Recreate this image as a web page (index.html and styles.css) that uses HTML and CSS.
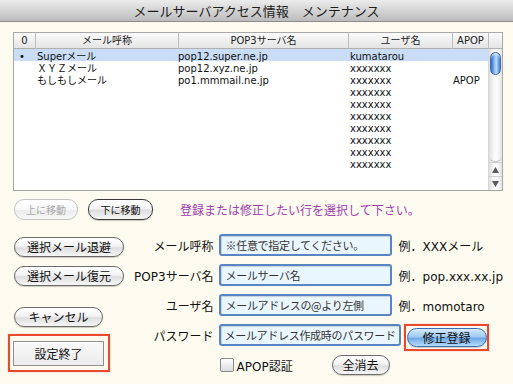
FILE: index.html
```html
<!DOCTYPE html>
<html lang="ja">
<head>
<meta charset="utf-8">
<title>メールサーバアクセス情報 メンテナンス</title>
<link rel="stylesheet" href="styles.css">
</head>
<body>
<div class="titlebar">メールサーバアクセス情報　メンテナンス</div>
<main class="content">
  <section class="table">
    <div class="thead">
      <div class="th">0</div>
      <div class="th">メール呼称</div>
      <div class="th">POP3サーバ名</div>
      <div class="th">ユーザ名</div>
      <div class="th">APOP</div>
      <div class="th"></div>
    </div>
    <div class="tbody">
      <div class="rows">
        <div class="row selected"><span class="mark">•</span><span>Superメール</span><span>pop12.super.ne.jp</span><span>kumatarou</span><span></span></div>
        <div class="row"><span class="mark"></span><span>ＸＹＺメール</span><span>pop12.xyz.ne.jp</span><span>xxxxxxx</span><span></span></div>
        <div class="row"><span class="mark"></span><span>もしもしメール</span><span>po1.mmmail.ne.jp</span><span>xxxxxxx</span><span>APOP</span></div>
        <div class="row"><span class="mark"></span><span></span><span></span><span>xxxxxxx</span><span></span></div>
        <div class="row"><span class="mark"></span><span></span><span></span><span>xxxxxxx</span><span></span></div>
        <div class="row"><span class="mark"></span><span></span><span></span><span>xxxxxxx</span><span></span></div>
        <div class="row"><span class="mark"></span><span></span><span></span><span>xxxxxxx</span><span></span></div>
        <div class="row"><span class="mark"></span><span></span><span></span><span>xxxxxxx</span><span></span></div>
        <div class="row"><span class="mark"></span><span></span><span></span><span>xxxxxxx</span><span></span></div>
        <div class="row"><span class="mark"></span><span></span><span></span><span>xxxxxxx</span><span></span></div>
      </div>
      <div class="scrollbar">
        <div class="track"><div class="thumb"></div></div>
        <div class="arrow"><svg width="7" height="6" viewBox="0 0 7 6"><polygon points="3.5,0 7,6 0,6" fill="#5a5a5a"/></svg></div>
        <div class="arrow"><svg width="7" height="6" viewBox="0 0 7 6"><polygon points="0,0 7,0 3.5,6" fill="#5a5a5a"/></svg></div>
      </div>
    </div>
  </section>

  <div class="moverow">
    <button class="pill small disabled">上に移動</button>
    <button class="pill small dark">下に移動</button>
    <span class="message">登録または修正したい行を選択して下さい。</span>
  </div>

  <div class="form">
    <div class="actions">
      <button class="pill wide">選択メール退避</button>
      <button class="pill wide gap1">選択メール復元</button>
      <button class="pill cancel">キャンセル</button>
      <div class="redframe finish-frame"><button class="square">設定終了</button></div>
    </div>
    <div class="fields">
      <div class="field">
        <span class="label">メール呼称</span>
        <input class="input" type="text" value="※任意で指定してください。">
        <span class="example">例．XXXメール</span>
      </div>
      <div class="field">
        <span class="label">POP3サーバ名</span>
        <input class="input" type="text" value="メールサーバ名">
        <span class="example">例．pop.xxx.xx.jp</span>
      </div>
      <div class="field">
        <span class="label">ユーザ名</span>
        <input class="input" type="text" value="メールアドレスの@より左側">
        <span class="example">例．momotaro</span>
      </div>
      <div class="field">
        <span class="label">パスワード</span>
        <input class="input pw" type="text" value="メールアドレス作成時のパスワード">
        <div class="redframe save-frame"><button class="pill blue">修正登録</button></div>
      </div>
      <div class="field last">
        <label class="check"><span class="box"></span><span>APOP認証</span></label>
        <button class="pill clear">全消去</button>
      </div>
    </div>
  </div>
</main>
</body>
</html>
```

FILE: styles.css
```css
* { box-sizing: border-box; }

body {
  margin: 0;
  width: 513px;
  height: 384px;
  overflow: hidden;
  background: #fdfbef;
  font-family: "DejaVu Sans", "Noto Sans CJK JP", sans-serif;
  color: #111;
}

.titlebar {
  height: 22px;
  line-height: 21px;
  text-align: center;
  font-size: 13px;
  font-family: "Noto Sans CJK JP", sans-serif;
  color: #1c1c1c;
  background: linear-gradient(#ececec, #bcbcbc);
  border-bottom: 1px solid #8c8c8c;
}

.content {
  padding: 10px 10px 0 13px;
}

/* table */
.table {
  width: 490px;
  height: 159px;
  border: 1px solid #a8a8a8;
  background: #fff;
  display: flex;
  flex-direction: column;
}

.thead {
  display: grid;
  grid-template-columns: 22px 143px 170px 104px 36px 1fr;
  height: 16px;
  border-bottom: 1px solid #b0b0b0;
  background: linear-gradient(#fbfbfb, #e4e4e4);
}

.th {
  border-right: 1px solid #bcbcbc;
  font-size: 10px;
  line-height: 16px;
  text-align: center;
  color: #222;
  white-space: nowrap;
}
.th:last-child { border-right: none; }

.tbody {
  flex: 1;
  display: flex;
  min-height: 0;
}

.rows { flex: 1; }

.row {
  display: grid;
  grid-template-columns: 23px 141px 172px 103px 1fr;
  height: 12px;
  font-size: 10px;
  line-height: 13px;
  white-space: nowrap;
}
.row span { padding-top: 1px; }
.row .mark { padding-left: 5px; }
.row.selected { background: #c9ddf6; }

.scrollbar {
  width: 14px;
  display: flex;
  flex-direction: column;
  border-left: 1px solid #d6d6d6;
  background: linear-gradient(90deg, #dedede, #f6f6f6 35%, #fdfdfd 60%, #e4e4e4);
}

.track {
  flex: 1;
  padding: 3px 1px 0 1px;
  border-bottom: 1px solid #c8c8c8;
  border-radius: 0 0 6px 6px;
}

.thumb {
  height: 23px;
  border-radius: 6px;
  border: 1px solid #3a6db6;
  background: linear-gradient(90deg, #2f66c0, #8fc0f0 40%, #b9dbf8 60%, #3f7bd0);
  box-shadow: inset 0 2px 1px rgba(255,255,255,.5);
}

.arrow {
  height: 14px;
  display: flex;
  align-items: center;
  justify-content: center;
  border-top: 1px solid #cfcfcf;
}

/* move row */
.moverow {
  display: flex;
  align-items: center;
  margin-top: 8px;
  margin-left: 1px;
  height: 21px;
}

.pill {
  font-family: "Noto Sans CJK JP", sans-serif;
  font-size: 12px;
  line-height: 18px;
  height: 20px;
  padding: 0;
  color: #111;
  border: 1px solid #6a6a6a;
  border-radius: 10px;
  background: linear-gradient(#ffffff, #f3f3f3 45%, #dedede 55%, #f6f6f6);
  box-shadow: 0 1px 1px rgba(0,0,0,.2);
}

.pill.small {
  width: 64px;
  height: 21px;
  font-size: 10px;
}
.pill.disabled {
  color: #a8a8a8;
  border-color: #c4c4c4;
  background: linear-gradient(#ffffff, #f7f7f7 50%, #ececec 55%, #f8f8f8);
  box-shadow: none;
}
.pill.dark {
  margin-left: 10px;
  width: 65px;
  border-color: #3a3a3a;
}

.message {
  margin-left: 27px;
  font-size: 12px;
  font-family: "Noto Sans CJK JP", sans-serif;
  color: #a03cb0;
}

/* form */
.form {
  display: flex;
  margin-top: 14px;
}

.actions {
  width: 117px;
  display: flex;
  flex-direction: column;
  align-items: flex-start;
  padding-top: 3px;
  padding-left: 1px;
}

.pill.wide { width: 110px; }
.pill.gap1 { margin-top: 9px; }
.pill.cancel { width: 89px; margin-top: 21px; }

.redframe {
  border: 2px solid #e84a30;
  box-shadow: 0 0 1px rgba(232,74,48,.6);
}

.finish-frame {
  margin-top: 7px;
  margin-left: -6px;
  width: 102px;
  height: 38px;
  padding: 5px 4px 4px 3px;
}

.square {
  width: 91px;
  height: 25px;
  padding: 0;
  font-family: "Noto Sans CJK JP", sans-serif;
  font-size: 12px;
  color: #111;
  border: 1px solid #8e8e8e;
  background: linear-gradient(#f9f9f9, #ececec);
  box-shadow: inset 0 1px 0 #fff;
}

.fields {
  display: flex;
  flex-direction: column;
  gap: 8px;
}

.field {
  display: flex;
  align-items: center;
  height: 22px;
  font-size: 12px;
}

.label {
  width: 87px;
  margin-right: 5px;
  text-align: right;
  white-space: nowrap;
}

.input {
  width: 173px;
  height: 22px;
  padding: 0 0 0 5px;
  font-family: "Noto Sans CJK JP", sans-serif;
  font-size: 11px;
  letter-spacing: -0.3px;
  color: #333;
  background: #e9f6fe;
  border: 2px solid #5a85c4;
  border-radius: 3px;
  box-shadow: inset 1px 1px 1px rgba(0,0,0,.15);
  outline: none;
}
.input.pw { width: 182px; padding-left: 4px; }

.example {
  margin-left: 7px;
  white-space: nowrap;
}

.save-frame {
  margin-left: 3px;
  margin-top: 4px;
  width: 85px;
  height: 27px;
  padding: 2px 0 0 1px;
}

.pill.blue {
  width: 80px;
  height: 19px;
  line-height: 17px;
  border-color: #3c6cb0;
  background: linear-gradient(#d6ebfc, #9fcaf2 45%, #6fa9e6 55%, #b7ddfa);
}

.field.last {
  margin-top: 1px;
  height: 20px;
  padding-left: 93px;
}

.check {
  display: flex;
  align-items: center;
  width: 112px;
  font-size: 12px;
}
.check .box {
  width: 14px;
  height: 14px;
  margin-right: 3px;
  border: 1px solid #8a8a8a;
  border-radius: 2px;
  background: linear-gradient(#ffffff, #dcdcdc);
}

.pill.clear {
  width: 58px;
  height: 20px;
}
```
